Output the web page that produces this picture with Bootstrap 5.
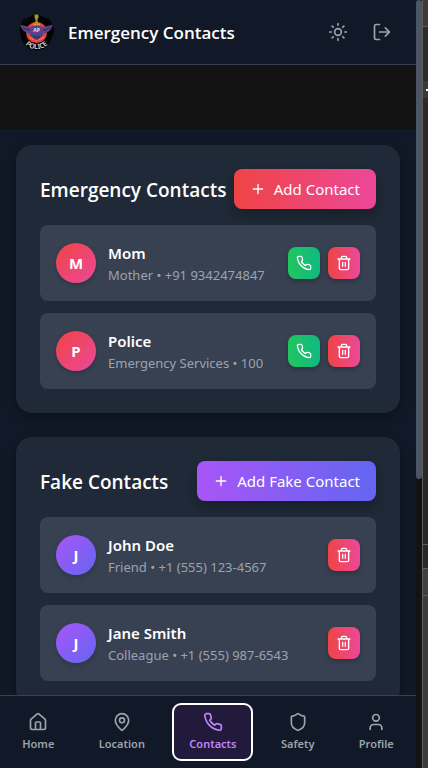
<!DOCTYPE html>
<html lang="en" data-bs-theme="dark">
<head>
<meta charset="utf-8">
<meta name="viewport" content="width=device-width, initial-scale=1">
<title>Emergency Contacts</title>
<link href="https://cdn.jsdelivr.net/npm/bootstrap@5.3.0/dist/css/bootstrap.min.css" rel="stylesheet">
<style>
  body { font-family: "Noto Sans", "Open Sans", sans-serif; font-size: 15px; line-height: 24px; background: #131313; color: #fff; }
  svg { display: block; flex: none; }
  .stroke-icon { fill: none; stroke: currentColor; stroke-width: 2; stroke-linecap: round; stroke-linejoin: round; }
  .app-header { background: #111827; border-bottom: 1px solid #374151; min-height: 65px; }
  .app-title, .panel-title { font-family: "Open Sans", "Noto Sans", sans-serif; font-weight: 600; line-height: 28px; padding-top: 2px; }
  .app-title { font-size: 17px; }
  .panel-title { font-size: 19px; }
  .header-btn { width: 36px; height: 36px; color: #9ca3af; border: 0; }
  .notice-strip { height: 64px; background: #131313; }
  .screen-body { background: #111827; min-height: 0; }
  .panel { background: #1f2937; border-radius: 16px; box-shadow: 0 4px 12px rgba(0,0,0,.25); }
  .action-btn { height: 40px; border: 0; border-radius: 8px; color: #fff; font-size: 15px; line-height: 24px; box-shadow: 0 6px 12px rgba(0,0,0,.25); }
  .grad-red { background: linear-gradient(90deg, #ef4444, #ec4899); }
  .grad-purple { background: linear-gradient(90deg, #a855f7, #6366f1); }
  .grad-green { background: linear-gradient(90deg, #22c55e, #10b981); }
  .contact-list { gap: 12px; }
  .contact-row { background: #374151; border-radius: 8px; gap: 12px; }
  .avatar { width: 40px; height: 40px; font-weight: 700; box-shadow: 0 2px 5px rgba(0,0,0,.2); }
  .avatar.grad-red { background: linear-gradient(135deg, #ef4444, #ec4899); }
  .avatar.grad-purple { background: linear-gradient(135deg, #a855f7, #6366f1); }
  .contact-name { font-size: 15px; line-height: 24px; font-weight: 600; }
  .contact-info { font-size: 13px; line-height: 20px; color: #9ca3af; }
  .square-btn { width: 32px; height: 32px; border: 0; border-radius: 8px; color: #fff; box-shadow: 0 2px 5px rgba(0,0,0,.25); }
  .bottom-nav { background: #111827; border-top: 1px solid #374151; }
  .tab-link { font-size: 11px; line-height: 16px; font-weight: 600; color: #9ca3af; text-decoration: none; border-radius: 8px; }
  .tab-link.active { color: #c084fc; background: #221a3a; outline: 2px solid #fff; outline-offset: -1px; }
  .scroll-track { width: 6px; background: #131313; }
  .scroll-thumb { background: #4b5563; border-radius: 3px; height: 62.4%; }
  .backdrop { width: 6px; border-left: 1px solid #5c5c5c; background: #2b2b2b; }
  .bd-a, .bd-c, .bd-d, .bd-f { border-bottom: 1px solid #5c5c5c; }
  .bd-a { height: 27px; background: #3d3a39; }
  .bd-b { height: 54px; }
  .bd-chip { height: 17px; background: #3a3a3a; }
  .bd-chip div { width: 2px; height: 2px; background: #fff; }
  .bd-f { height: 447px; background: #2a2928; }
  .bd-c { height: 24px; background: #292929; }
  .bd-d { height: 27px; background: #404040; }
  .bd-e { background: #3b3b3b; }
</style>
<script src="https://cdn.jsdelivr.net/npm/bootstrap@5.3.0/dist/js/bootstrap.bundle.min.js"></script>
</head>
<body>
<svg width="0" height="0" class="position-absolute" aria-hidden="true">
  <symbol id="i-phone" viewBox="0 0 24 24"><path d="M22 16.92v3a2 2 0 0 1-2.18 2 19.79 19.79 0 0 1-8.63-3.07 19.5 19.5 0 0 1-6-6 19.79 19.79 0 0 1-3.07-8.67A2 2 0 0 1 4.11 2h3a2 2 0 0 1 2 1.72 12.84 12.84 0 0 0 .7 2.81 2 2 0 0 1-.45 2.11L8.09 9.91a16 16 0 0 0 6 6l1.27-1.27a2 2 0 0 1 2.11-.45 12.84 12.84 0 0 0 2.81.7A2 2 0 0 1 22 16.92z"/></symbol>
  <symbol id="i-trash" viewBox="0 0 24 24"><path d="M3 6h18M19 6v14a2 2 0 0 1-2 2H7a2 2 0 0 1-2-2V6M8 6V4a2 2 0 0 1 2-2h4a2 2 0 0 1 2 2v2M10 11v6M14 11v6"/></symbol>
  <symbol id="i-plus" viewBox="0 0 24 24"><path d="M5 12h14M12 5v14"/></symbol>
</svg>

<div class="d-flex vh-100 overflow-hidden">
  <div class="d-flex flex-column flex-grow-1 overflow-hidden">
    <header class="app-header d-flex align-items-center justify-content-between px-3 flex-shrink-0">
      <div class="d-flex align-items-center">
        <svg class="me-2" width="44" height="40" viewBox="0 0 44 40" role="img" aria-label="AP Police emblem">
          <defs><path id="motto" d="M5.500 25 Q9 37 20.500 37 Q32 37 35.500 25"/></defs>
          <path d="M20.500 1 C16 4 11 6 6.500 8 C6 13 3.500 16 3.500 19 C5 22 4.500 28 8 32 C11 36 16 38 20.500 38.500 C26 38 31 36 33.500 31 C36 27 36.500 23 38.500 18 C37 15 36 12 34.500 8 C30 6 25 4 20.500 1z" fill="#030405"/>
          <circle cx="20.500" cy="20.500" r="10.500" fill="#e8443c"/>
          <circle cx="20.500" cy="20" r="7" fill="#4f3f87"/>
          <path d="M13.500 25 Q20.500 31 28 25" fill="none" stroke="#f58a62"/>
          <path d="M4.500 13 C9 13.500 12 15 16 15 L25 15 C29 15 32 13.500 36.500 13 C35.500 18 32 21 26 22 L15 22 C9 21 5.500 18 4.500 13z" fill="#5a4588"/>
          <path d="M7 15.500 Q10 18 14 18 M34 15.500 Q31 18 27 18 M17 25h7 M18 27h5" fill="none" stroke="#332955"/>
          <path d="M18.500 2.500h4v3l-1 2v2l2 2h-6l2-2v-2l-1-2z" fill="#a09a22"/>
          <path d="M17 11.500h7v2h-7z" fill="#e58a2e"/>
          <text x="20.500" y="20" text-anchor="middle" font-size="5" font-weight="700" fill="#e5ddf2">AP</text>
          <text font-size="7" font-weight="600" fill="#d8d8d8" text-anchor="middle"><textPath href="#motto" startOffset="50%">POLICE</textPath></text>
        </svg>
        <h1 class="app-title mb-0 text-nowrap">Emergency Contacts</h1>
      </div>
      <div class="d-flex gap-2">
        <button type="button" class="btn header-btn p-2" aria-label="Toggle theme">
          <svg class="stroke-icon" width="20" height="20" viewBox="0 0 24 24"><circle cx="12" cy="12" r="4"/><path d="M12 2v2M12 20v2M4.930 4.930l1.410 1.410M17.660 17.660l1.410 1.410M2 12h2M20 12h2M6.340 17.660l-1.410 1.410M19.070 4.930l-1.410 1.410"/></svg>
        </button>
        <button type="button" class="btn header-btn p-2" aria-label="Log out">
          <svg class="stroke-icon" width="20" height="20" viewBox="0 0 24 24"><path d="M9 21H5a2 2 0 0 1-2-2V5a2 2 0 0 1 2-2h4M16 17l5-5-5-5M21 12H9"/></svg>
        </button>
      </div>
    </header>

    <div class="notice-strip flex-shrink-0"></div>

    <main class="screen-body flex-grow-1 overflow-hidden p-3">
      <section class="panel p-4 mb-4">
        <div class="d-flex align-items-center justify-content-between mb-3">
          <h2 class="panel-title mb-0 text-nowrap">Emergency Contacts</h2>
          <button type="button" class="btn action-btn grad-red d-flex align-items-center gap-2 px-3 py-2 text-nowrap"><svg class="stroke-icon" width="16" height="16"><use href="#i-plus"/></svg>Add Contact</button>
        </div>
        <ul class="contact-list list-unstyled d-grid mb-0">
          <li class="contact-row d-flex align-items-center p-3">
            <div class="avatar grad-red rounded-circle d-flex align-items-center justify-content-center flex-shrink-0">M</div>
            <div class="flex-grow-1 text-nowrap"><div class="contact-name">Mom</div><div class="contact-info">Mother • +91 9342474847</div></div>
            <div class="d-flex gap-2">
              <button type="button" class="btn square-btn grad-green p-2" aria-label="Call Mom"><svg class="stroke-icon" width="16" height="16"><use href="#i-phone"/></svg></button>
              <button type="button" class="btn square-btn grad-red p-2" aria-label="Delete Mom"><svg class="stroke-icon" width="16" height="16"><use href="#i-trash"/></svg></button>
            </div>
          </li>
          <li class="contact-row d-flex align-items-center p-3">
            <div class="avatar grad-red rounded-circle d-flex align-items-center justify-content-center flex-shrink-0">P</div>
            <div class="flex-grow-1 text-nowrap"><div class="contact-name">Police</div><div class="contact-info">Emergency Services • 100</div></div>
            <div class="d-flex gap-2">
              <button type="button" class="btn square-btn grad-green p-2" aria-label="Call Police"><svg class="stroke-icon" width="16" height="16"><use href="#i-phone"/></svg></button>
              <button type="button" class="btn square-btn grad-red p-2" aria-label="Delete Police"><svg class="stroke-icon" width="16" height="16"><use href="#i-trash"/></svg></button>
            </div>
          </li>
        </ul>
      </section>

      <section class="panel p-4">
        <div class="d-flex align-items-center justify-content-between mb-3">
          <h2 class="panel-title mb-0 text-nowrap">Fake Contacts</h2>
          <button type="button" class="btn action-btn grad-purple d-flex align-items-center gap-2 px-3 py-2 text-nowrap"><svg class="stroke-icon" width="16" height="16"><use href="#i-plus"/></svg>Add Fake Contact</button>
        </div>
        <ul class="contact-list list-unstyled d-grid mb-0">
          <li class="contact-row d-flex align-items-center p-3">
            <div class="avatar grad-purple rounded-circle d-flex align-items-center justify-content-center flex-shrink-0">J</div>
            <div class="flex-grow-1 text-nowrap"><div class="contact-name">John Doe</div><div class="contact-info">Friend • +1 (555) 123-4567</div></div>
            <button type="button" class="btn square-btn grad-red p-2" aria-label="Delete John Doe"><svg class="stroke-icon" width="16" height="16"><use href="#i-trash"/></svg></button>
          </li>
          <li class="contact-row d-flex align-items-center p-3">
            <div class="avatar grad-purple rounded-circle d-flex align-items-center justify-content-center flex-shrink-0">J</div>
            <div class="flex-grow-1 text-nowrap"><div class="contact-name">Jane Smith</div><div class="contact-info">Colleague • +1 (555) 987-6543</div></div>
            <button type="button" class="btn square-btn grad-red p-2" aria-label="Delete Jane Smith"><svg class="stroke-icon" width="16" height="16"><use href="#i-trash"/></svg></button>
          </li>
        </ul>
      </section>
    </main>

    <nav class="bottom-nav d-flex justify-content-around py-2 flex-shrink-0" aria-label="Main">
      <a href="#home" class="tab-link d-flex flex-column align-items-center gap-1 px-3 py-2"><svg class="stroke-icon" width="20" height="20" viewBox="0 0 24 24"><path d="M15 21v-8a1 1 0 0 0-1-1h-4a1 1 0 0 0-1 1v8M3 10a2 2 0 0 1 .709-1.528l7-5.999a2 2 0 0 1 2.582 0l7 5.999A2 2 0 0 1 21 10v9a2 2 0 0 1-2 2H5a2 2 0 0 1-2-2z"/></svg>Home</a>
      <a href="#location" class="tab-link d-flex flex-column align-items-center gap-1 px-3 py-2"><svg class="stroke-icon" width="20" height="20" viewBox="0 0 24 24"><path d="M20 10c0 4.993-5.539 10.193-7.399 11.799a1 1 0 0 1-1.202 0C9.539 20.193 4 14.993 4 10a8 8 0 0 1 16 0z"/><circle cx="12" cy="10" r="3"/></svg>Location</a>
      <a href="#contacts" class="tab-link active d-flex flex-column align-items-center gap-1 px-3 py-2" aria-current="page"><svg class="stroke-icon" width="20" height="20"><use href="#i-phone"/></svg>Contacts</a>
      <a href="#safety" class="tab-link d-flex flex-column align-items-center gap-1 px-3 py-2"><svg class="stroke-icon" width="20" height="20" viewBox="0 0 24 24"><path d="M20 13c0 5-3.500 7.500-7.660 8.950a1 1 0 0 1-.67-.01C7.500 20.500 4 18 4 13V6a1 1 0 0 1 1-1c2 0 4.500-1.200 6.240-2.720a1.170 1.170 0 0 1 1.520 0C14.510 3.810 17 5 19 5a1 1 0 0 1 1 1z"/></svg>Safety</a>
      <a href="#profile" class="tab-link d-flex flex-column align-items-center gap-1 px-3 py-2"><svg class="stroke-icon" width="20" height="20" viewBox="0 0 24 24"><path d="M19 21v-2a4 4 0 0 0-4-4H9a4 4 0 0 0-4 4v2"/><circle cx="12" cy="7" r="4"/></svg>Profile</a>
    </nav>
  </div>

  <div class="scroll-track flex-shrink-0" aria-hidden="true"><div class="scroll-thumb"></div></div>
  <div class="backdrop d-flex flex-column flex-shrink-0" aria-hidden="true">
    <div class="bd-a"></div>
    <div class="bd-b"></div>
    <div class="bd-chip d-flex align-items-center justify-content-end"><div></div></div>
    <div class="bd-f"></div>
    <div class="bd-c"></div>
    <div class="bd-d"></div>
    <div class="bd-e flex-grow-1"></div>
  </div>
</div>
</body>
</html>
